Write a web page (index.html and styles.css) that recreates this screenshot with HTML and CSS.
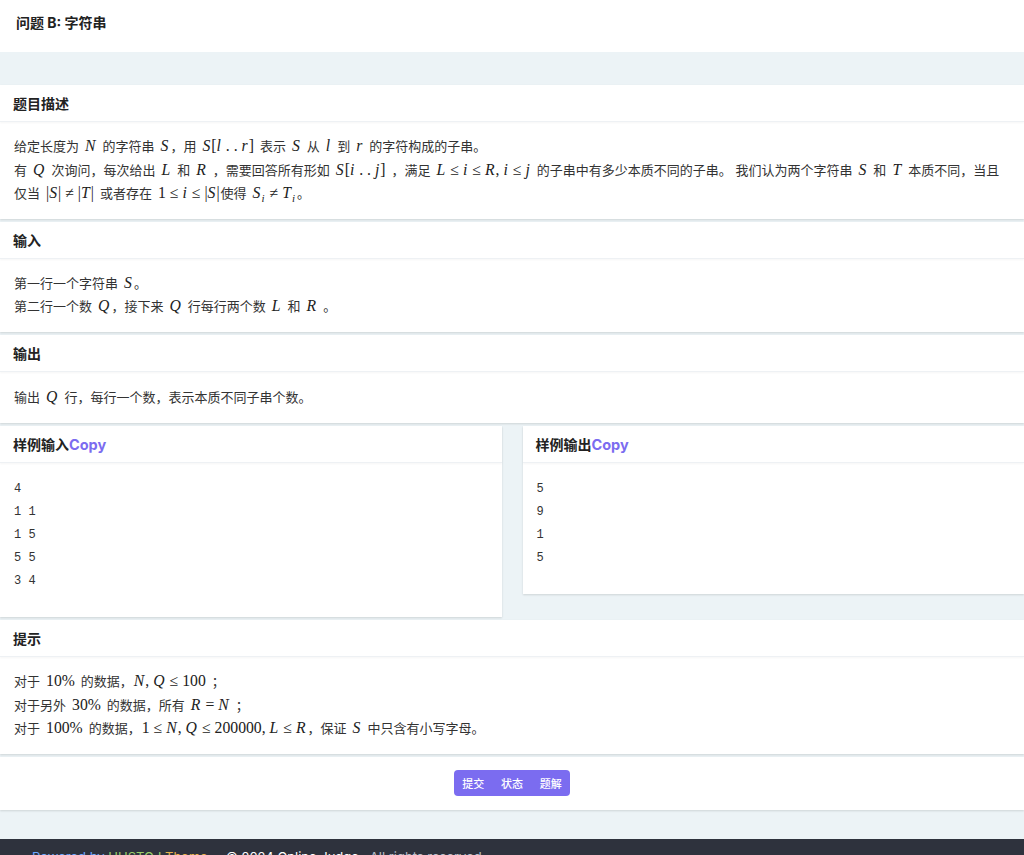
FILE: index.html
```html
<!DOCTYPE html>
<html lang="zh-CN">
<head>
<meta charset="utf-8">
<title>问题 B: 字符串</title>
<link rel="stylesheet" href="styles.css">
</head>
<body>
<header class="page-head">
  <h1 class="page-title">问题 B: 字符串</h1>
</header>
<main class="content">
  <section class="card">
    <div class="card-head">题目描述</div>
    <div class="card-body">
      <p>给定长度为<span class="tex"><i>N</i></span>的字符串<span class="tex nr"><i>S</i></span>，用<span class="tex"><i>S</i>[<i>l</i> . . <i>r</i>]</span>表示<span class="tex"><i>S</i></span>从<span class="tex"><i>l</i></span>到<span class="tex"><i>r</i></span>的字符构成的子串。<br>有<span class="tex"><i>Q</i></span>次询问，每次给出<span class="tex"><i>L</i></span>和<span class="tex"><i>R</i></span>，需要回答所有形如<span class="tex"><i>S</i>[<i>i</i> . . <i>j</i>]</span>，满足<span class="tex"><i>L</i><span class="rel">≤</span><i>i</i><span class="rel">≤</span><i>R</i>, <i>i</i><span class="rel">≤</span><i>j</i></span>的子串中有多少本质不同的子串。 我们认为两个字符串<span class="tex"><i>S</i></span>和<span class="tex"><i>T</i></span>本质不同，当且仅当<span class="tex">|<i>S</i>|<span class="rel">≠</span>|<i>T</i>|</span>或者存在<span class="tex nr">1<span class="rel">≤</span><i>i</i><span class="rel">≤</span>|<i>S</i>|</span>使得<span class="tex nr"><i>S</i><sub><i>i</i></sub><span class="rel">≠</span><i>T</i><sub><i>i</i></sub></span>。</p>
    </div>
  </section>

  <section class="card">
    <div class="card-head">输入</div>
    <div class="card-body">
      <p>第一行一个字符串<span class="tex nr"><i>S</i></span>。<br>第二行一个数<span class="tex nr"><i>Q</i></span>，接下来<span class="tex"><i>Q</i></span>行每行两个数<span class="tex"><i>L</i></span>和<span class="tex"><i>R</i></span>。</p>
    </div>
  </section>

  <section class="card">
    <div class="card-head">输出</div>
    <div class="card-body one">
      <p>输出<span class="tex"><i>Q</i></span>行，每行一个数，表示本质不同子串个数。</p>
    </div>
  </section>

  <div class="samples">
    <section class="card">
      <div class="card-head">样例输入<span class="copy">Copy</span></div>
      <div class="card-body">
        <pre class="code">4
1 1
1 5
5 5
3 4</pre>
      </div>
    </section>
    <section class="card">
      <div class="card-head">样例输出<span class="copy">Copy</span></div>
      <div class="card-body">
        <pre class="code">5
9
1
5</pre>
      </div>
    </section>
  </div>

  <section class="card">
    <div class="card-head">提示</div>
    <div class="card-body hint">
      <p>对于<span class="tex">10%</span>的数据，<span class="tex nl"><i>N</i>, <i>Q</i><span class="rel">≤</span>100</span>；<br>对于另外<span class="tex">30%</span>的数据，所有<span class="tex"><i>R</i><span class="rel">=</span><i>N</i></span>；<br>对于<span class="tex">100%</span>的数据，<span class="tex nl nr">1<span class="rel">≤</span><i>N</i>, <i>Q</i><span class="rel">≤</span>200000, <i>L</i><span class="rel">≤</span><i>R</i></span>，保证<span class="tex"><i>S</i></span>中只含有小写字母。</p>
    </div>
  </section>

  <section class="card actions">
    <div class="btn-group">
      <a class="btn">提交</a>
      <a class="btn">状态</a>
      <a class="btn">题解</a>
    </div>
  </section>
</main>
<footer class="page-foot">
  <p><span class="f1">Powered by</span> <span class="f2">HUSTOJ</span> <span class="f3">Theme</span> &nbsp; &nbsp; <span class="f4">© 2024 Online Judge</span> &nbsp; <span class="f5">All rights reserved</span></p>
</footer>
</body>
</html>
```
FILE: styles.css
```css
html, body {
  margin: 0;
  padding: 0;
}
body {
  background: #ecf3f6;
  font-family: Inter, "Noto Sans CJK SC", sans-serif;
  color: #2b2b2b;
  font-size: 13px;
}
.page-head {
  background: #fff;
  height: 52px;
  box-sizing: border-box;
  padding: 13px 16px 0;
}
.page-title {
  margin: 0;
  font-size: 14px;
  font-weight: 700;
  line-height: 20px;
  color: #222;
}
.content {
  padding-top: 33px;
  padding-bottom: 26px;
}
.card {
  background: #fff;
  box-shadow: 0 1px 2px rgba(0, 0, 0, 0.13);
  margin-bottom: 3px;
}
.card-head {
  height: 37px;
  box-sizing: border-box;
  padding: 0 13px;
  display: flex;
  align-items: center;
  font-size: 14px;
  font-weight: 700;
  color: #222;
  border-bottom: 1px solid #eef1f4;
  box-shadow: 0 1px 2px rgba(0, 0, 0, 0.04);
}
.card-body {
  padding: 13px 14px;
}
.card-body.one {
  padding: 14px 14px 14px;
}
.card-body.hint {
  padding: 13px 14px 13px;
}
.card-body p {
  margin: 0;
  line-height: 23.5px;
  color: #333;
}
.tex {
  font-family: "Liberation Serif", "DejaVu Serif", serif;
  font-size: 1.21em;
  line-height: 1;
  padding: 0 6px;
  white-space: nowrap;
  color: #222;
}
.tex.nr {
  padding-right: 1px;
}
.tex.nl {
  padding-left: 1px;
}
.tex i {
  font-style: italic;
  padding-right: 1px;
}
.rel {
  padding: 0 4px;
}
.tex sub {
  font-size: 0.7em;
  line-height: 0;
}
.copy {
  color: #7b6cf0;
  font-family: Inter, sans-serif;
  font-weight: 700;
  font-size: 14.5px;
}
.samples {
  display: grid;
  grid-template-columns: 1fr 1fr;
  column-gap: 21px;
  align-items: start;
}
.card-body .code {
  margin: 2px 0 11px;
  font-family: "Liberation Mono", "DejaVu Sans Mono", monospace;
  font-size: 12px;
  line-height: 23px;
  color: #333;
}
.actions {
  height: 53px;
  display: flex;
  align-items: center;
  justify-content: center;
}
.btn-group {
  display: flex;
  width: 116px;
  height: 26px;
  background: #7b6cf0;
  border-radius: 4px;
}
.btn {
  flex: 1;
  display: flex;
  align-items: center;
  justify-content: center;
  color: #fff;
  font-size: 11px;
  font-weight: 500;
  cursor: pointer;
}
.page-foot {
  background: #2e323d;
  height: 60px;
  box-sizing: border-box;
  padding: 10px 32px 0;
  color: #cfd3da;
  font-size: 13px;
}
.page-foot p {
  margin: 0;
}
.f1 { color: #6ea8ff; }
.f2 { color: #9acd6a; }
.f3 { color: #e8b44c; }
.f4 { color: #ffffff; }
.f5 { color: #b9bfca; }
```
